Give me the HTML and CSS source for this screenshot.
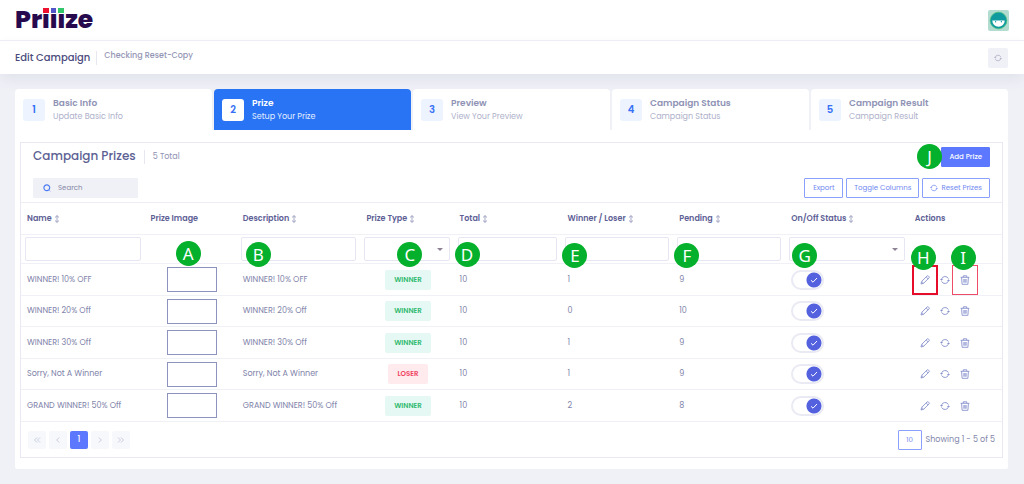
FILE: index.html
```html
<!DOCTYPE html>
<html lang="en">
<head>
<meta charset="utf-8">
<title>Priiize - Edit Campaign</title>
<link rel="stylesheet" href="styles.css">
</head>
<body>
<svg class="sprite" aria-hidden="true">
  <symbol id="sort" viewBox="0 0 6 8"><path d="M3 .7v6.6M1 2.5 3 .6l2 1.9M1 5.5l2 1.9 2-1.9" fill="none" stroke="currentColor" stroke-width=".8"/></symbol>
  <symbol id="sync" viewBox="0 0 10 10"><path d="M1.5 4.2A3.7 3.7 0 0 1 8.4 3.6M8.5 5.8A3.7 3.7 0 0 1 1.6 6.4" fill="none" stroke="currentColor" stroke-width=".9"/><path d="M0 4h3L1.5 5.7zM10 6H7l1.500-1.700z" fill="currentColor"/></symbol>
  <symbol id="pencil" viewBox="0 0 10 10"><path d="M1 9l.7-2.600L7 1.100a1 1 0 0 1 1.500 0l.4.4a1 1 0 0 1 0 1.500L3.600 8.300zM6.200 2l1.900 1.900M1.800 6.500l1.700 1.700" fill="none" stroke="currentColor" stroke-width=".9" stroke-linejoin="round"/></symbol>
  <symbol id="trash" viewBox="0 0 10 10"><path d="M.6 2.300h8.800M3.300 2.200V.8h3.400v1.400M1.600 2.400l.5 6.900h5.800l.5-6.900M3.900 4v3.700M5 4v3.700M6.100 4v3.700" fill="none" stroke="currentColor" stroke-width=".9"/></symbol>
  <symbol id="check" viewBox="0 0 8 8"><path d="M1 4.300l2 1.900L7 2" fill="none" stroke="currentColor" stroke-width="1"/></symbol>
  <symbol id="caret" viewBox="0 0 6 3"><path d="M0 0h6L3 3z" fill="currentColor"/></symbol>
</svg>

<header class="topbar">
  <a class="logo" href="#" aria-label="Priiize">Pr<span class="dot red">i</span><span class="dot blue">i</span><span class="dot green">i</span>ze</a>
  <svg class="avatar" viewBox="0 0 22 22" role="img" aria-label="User">
    <rect width="22" height="22" rx="2" fill="#b2dcd0"/>
    <circle cx="11" cy="11" r="8.700" fill="#0f9aa0" stroke="#43bd7a" stroke-width=".8"/>
    <path d="M4.500 11h13a6.500 6.500 0 0 1-13 0z" fill="#fff"/>
    <circle cx="8" cy="12.300" r=".7" fill="#0f9aa0"/><circle cx="14" cy="12.300" r=".7" fill="#0f9aa0"/>
  </svg>
</header>

<div class="subbar">
  <h1 class="page-title">Edit Campaign</h1>
  <span class="page-sub">Checking Reset-Copy</span>
  <button class="refresh" type="button" aria-label="Refresh"><svg class="icon-sm"><use href="#sync"/></svg></button>
</div>

<main class="content">
  <nav class="tabs">
    <a class="tab" href="#"><span class="step">1</span><span class="tab-text"><b>Basic Info</b><span>Update Basic Info</span></span></a>
    <a class="tab active" href="#" aria-current="step"><span class="step">2</span><span class="tab-text"><b>Prize</b><span>Setup Your Prize</span></span></a>
    <a class="tab" href="#"><span class="step">3</span><span class="tab-text"><b>Preview</b><span>View Your Preview</span></span></a>
    <a class="tab" href="#"><span class="step">4</span><span class="tab-text"><b>Campaign Status</b><span>Campaign Status</span></span></a>
    <a class="tab" href="#"><span class="step">5</span><span class="tab-text"><b>Campaign Result</b><span>Campaign Result</span></span></a>
  </nav>

  <div class="panel">
    <section class="card">
      <div class="card-head">
        <div class="head-row">
          <h2 class="card-title">Campaign Prizes</h2>
          <span class="total">5 Total</span>
          <div class="add-wrap">
            <button class="btn solid" type="button">Add Prize</button>
            <span class="marker mark-j">J</span>
          </div>
        </div>
        <div class="head-row">
          <label class="search">
            <svg class="icon-sm" viewBox="0 0 8 8" aria-hidden="true"><path d="M5.800 5.800l1.600 1.700" stroke="#a9bdfa" stroke-width="1"/><circle cx="3.800" cy="3.800" r="2.900" fill="none" stroke="#4c7cf3" stroke-width="1.200"/></svg>
            <input type="text" placeholder="Search" aria-label="Search">
          </label>
          <div class="tools">
            <button class="btn" type="button">Export</button>
            <button class="btn" type="button">Toggle Columns</button>
            <button class="btn" type="button"><svg class="icon-sm"><use href="#sync"/></svg>Reset Prizes</button>
          </div>
        </div>
      </div>

      <table class="prizes">
        <colgroup><col class="c-name"><col class="c-image"><col class="c-name"><col class="c-type"><col class="c-total"><col class="c-wl"><col class="c-pending"><col class="c-name"><col class="c-actions"></colgroup>
        <thead>
          <tr>
            <th>Name <svg class="sort"><use href="#sort"/></svg></th>
            <th>Prize Image</th>
            <th>Description <svg class="sort"><use href="#sort"/></svg></th>
            <th>Prize Type <svg class="sort"><use href="#sort"/></svg></th>
            <th>Total <svg class="sort"><use href="#sort"/></svg></th>
            <th>Winner / Loser <svg class="sort"><use href="#sort"/></svg></th>
            <th>Pending <svg class="sort"><use href="#sort"/></svg></th>
            <th>On/Off Status <svg class="sort"><use href="#sort"/></svg></th>
            <th>Actions</th>
          </tr>
          <tr class="filters">
            <td><input class="field" type="text" aria-label="Filter name"></td>
            <td><span class="marker mark-a">A</span></td>
            <td><input class="field" type="text" aria-label="Filter description"><span class="marker mark-b">B</span></td>
            <td><select class="field" aria-label="Filter prize type"><option></option></select><svg class="caret"><use href="#caret"/></svg><span class="marker mark-c">C</span></td>
            <td><input class="field" type="text" aria-label="Filter total"><span class="marker mark-d">D</span></td>
            <td><input class="field" type="text" aria-label="Filter winner or loser"><span class="marker mark-e">E</span></td>
            <td><input class="field" type="text" aria-label="Filter pending"><span class="marker mark-e">F</span></td>
            <td><select class="field" aria-label="Filter status"><option></option></select><svg class="caret"><use href="#caret"/></svg><span class="marker mark-g">G</span></td>
            <td><span class="marker mark-h">H</span><span class="marker mark-i">I</span></td>
          </tr>
        </thead>
        <tbody>
          <tr>
            <td>WINNER! 10% OFF</td><td><div class="thumb"></div></td><td>WINNER! 10% OFF</td>
            <td><span class="tag win">WINNER</span></td><td>10</td><td>1</td><td>9</td>
            <td><label class="switch"><input type="checkbox" checked aria-label="Status"><svg><use href="#check"/></svg></label></td>
            <td><div class="actions"><button class="act outlined" type="button" aria-label="Edit"><svg><use href="#pencil"/></svg></button><button class="act" type="button" aria-label="Reset"><svg><use href="#sync"/></svg></button><button class="act outlined-thin" type="button" aria-label="Delete"><svg><use href="#trash"/></svg></button></div></td>
          </tr>
          <tr>
            <td>WINNER! 20% Off</td><td><div class="thumb"></div></td><td>WINNER! 20% Off</td>
            <td><span class="tag win">WINNER</span></td><td>10</td><td>0</td><td>10</td>
            <td><label class="switch"><input type="checkbox" checked aria-label="Status"><svg><use href="#check"/></svg></label></td>
            <td><div class="actions"><button class="act" type="button" aria-label="Edit"><svg><use href="#pencil"/></svg></button><button class="act" type="button" aria-label="Reset"><svg><use href="#sync"/></svg></button><button class="act" type="button" aria-label="Delete"><svg><use href="#trash"/></svg></button></div></td>
          </tr>
          <tr>
            <td>WINNER! 30% Off</td><td><div class="thumb"></div></td><td>WINNER! 30% Off</td>
            <td><span class="tag win">WINNER</span></td><td>10</td><td>1</td><td>9</td>
            <td><label class="switch"><input type="checkbox" checked aria-label="Status"><svg><use href="#check"/></svg></label></td>
            <td><div class="actions"><button class="act" type="button" aria-label="Edit"><svg><use href="#pencil"/></svg></button><button class="act" type="button" aria-label="Reset"><svg><use href="#sync"/></svg></button><button class="act" type="button" aria-label="Delete"><svg><use href="#trash"/></svg></button></div></td>
          </tr>
          <tr>
            <td>Sorry, Not A Winner</td><td><div class="thumb"></div></td><td>Sorry, Not A Winner</td>
            <td><span class="tag lose">LOSER</span></td><td>10</td><td>1</td><td>9</td>
            <td><label class="switch"><input type="checkbox" checked aria-label="Status"><svg><use href="#check"/></svg></label></td>
            <td><div class="actions"><button class="act" type="button" aria-label="Edit"><svg><use href="#pencil"/></svg></button><button class="act" type="button" aria-label="Reset"><svg><use href="#sync"/></svg></button><button class="act" type="button" aria-label="Delete"><svg><use href="#trash"/></svg></button></div></td>
          </tr>
          <tr>
            <td>GRAND WINNER! 50% Off</td><td><div class="thumb"></div></td><td>GRAND WINNER! 50% Off</td>
            <td><span class="tag win">WINNER</span></td><td>10</td><td>2</td><td>8</td>
            <td><label class="switch"><input type="checkbox" checked aria-label="Status"><svg><use href="#check"/></svg></label></td>
            <td><div class="actions"><button class="act" type="button" aria-label="Edit"><svg><use href="#pencil"/></svg></button><button class="act" type="button" aria-label="Reset"><svg><use href="#sync"/></svg></button><button class="act" type="button" aria-label="Delete"><svg><use href="#trash"/></svg></button></div></td>
          </tr>
        </tbody>
      </table>

      <footer class="card-foot">
        <nav class="pager" aria-label="Pages">
          <button type="button" disabled aria-label="First"><svg viewBox="0 0 8 8"><path d="M4 1.500 1.500 4 4 6.500M7 1.500 4.500 4 7 6.500"/></svg></button>
          <button type="button" disabled aria-label="Previous"><svg viewBox="0 0 8 8"><path d="M5.200 1.500 2.700 4l2.500 2.500"/></svg></button>
          <button type="button" class="current">1</button>
          <button type="button" disabled aria-label="Next"><svg viewBox="0 0 8 8"><path d="M2.800 1.500 5.300 4 2.800 6.500"/></svg></button>
          <button type="button" disabled aria-label="Last"><svg viewBox="0 0 8 8"><path d="M1 1.500 3.500 4 1 6.500M4 1.500 6.500 4 4 6.500"/></svg></button>
        </nav>
        <select class="page-size" aria-label="Rows per page"><option>10</option></select>
        <span class="showing">Showing 1 - 5 of 5</span>
      </footer>
    </section>
  </div>
</main>
</body>
</html>
```
FILE: styles.css
```css
* { box-sizing: border-box; }
body {
  margin: 0;
  background: #f0f1f7;
  color: #8184aa;
  font: 8px/12px Poppins, Inter, "Open Sans", sans-serif;
}
button, input, select { font: inherit; color: inherit; margin: 0; }
button { cursor: pointer; }
a { color: inherit; text-decoration: none; }
.sprite { position: absolute; width: 0; height: 0; }
.icon-sm { width: 8px; height: 8px; flex: none; }

.topbar {
  display: flex;
  align-items: center;
  justify-content: space-between;
  height: 41px;
  padding: 0 15px;
  background: #fff;
  border-bottom: 1px solid #efeff7;
}
.logo {
  color: #270a4e;
  font-size: 25px;
  font-weight: 800;
  line-height: 36px;
}
.dot { position: relative; }
.dot::before {
  content: "";
  position: absolute;
  left: 0;
  right: 0;
  top: 6px;
  height: 5px;
  border: solid #fff;
  border-width: 0 1px 1px;
}
.red::before { background: #ee1130; }
.blue::before { background: #5356c9; }
.green::before { background: #32c66b; }
.avatar { width: 21px; height: 21px; }

.subbar {
  position: relative;
  display: flex;
  align-items: center;
  height: 33px;
  padding: 0 16px 0 15px;
  background: #fff;
  box-shadow: 0 6px 14px rgba(70, 75, 105, .08);
}
.page-title {
  margin: 0;
  padding-right: 6px;
  border-right: 1px solid #e6e7f1;
  color: #4a4b7c;
  font-size: 10px;
  font-weight: 500;
  line-height: 14px;
}
.page-sub { padding: 0 0 3px 7px; font-size: 8px; font-weight: 500; color: #9496b5; }
.refresh {
  display: grid;
  place-items: center;
  width: 20px;
  height: 20px;
  margin-left: auto;
  padding: 0;
  border: 0;
  border-radius: 2px;
  background: #f0f1f7;
  color: #a3a6bd;
}

.content { padding: 15px 16px 15px 15px; }
.tabs { position: relative; display: grid; grid-template-columns: repeat(5, 1fr); gap: 2px; }
.tab {
  display: flex;
  align-items: center;
  gap: 8px;
  height: 41px;
  padding-left: 8px;
  background: #fff;
  border-radius: 4px 4px 0 0;
  color: #aeb1ca;
}
.step {
  display: grid;
  place-items: center;
  width: 22px;
  height: 22px;
  border-radius: 3px;
  background: #edf4ff;
  color: #3670f5;
  font-size: 10px;
  font-weight: 600;
}
.tab-text { display: grid; font-size: 8px; line-height: 13px; }
.tab-text b { color: #9093b5; font-size: 9px; font-weight: 600; }
.active { background: #2874f4; color: #e4eeff; }
.active b { color: #fff; }
.active .step { background: #fff; }

.panel { padding: 12px 5px 11px; background: #fff; border-radius: 0 0 2px 2px; }
.card { border: 1px solid #e8e9f3; }
.card-head { display: grid; gap: 11px; padding: 4px 12px; border-bottom: 1px solid #ecedf5; }
.head-row { display: flex; align-items: center; height: 20px; }
.card-title {
  margin: 0;
  padding: 0 8px 2px 0;
  color: #5c5f94;
  font-size: 12px;
  font-weight: 500;
  line-height: 16px;
}
.total { padding: 1px 8px; border-left: 1px solid #e6e7f1; color: #8f92b4; }
.add-wrap { position: relative; margin-left: auto; }
.btn {
  display: flex;
  align-items: center;
  justify-content: center;
  gap: 3px;
  min-width: 39px;
  height: 20px;
  padding: 0 7px;
  border: 1px solid #8aa0fa;
  border-radius: 1px;
  background: #fff;
  color: #7089f2;
  font-size: 7px;
}
.solid { border-color: #5b78ff; background: #5b78ff; color: #fff; font-weight: 500; }
.tools { display: flex; gap: 3px; margin-left: auto; }
.search {
  display: flex;
  align-items: center;
  gap: 7px;
  width: 105px;
  height: 20px;
  padding: 0 10px;
  border-radius: 1px;
  background: #f0f1f7;
}
.search input { width: 100%; min-width: 0; padding: 0; border: 0; background: none; font-size: 7px; outline: 0; }
.search input::placeholder { color: #8588a6; opacity: 1; }

.prizes { width: 100%; table-layout: fixed; border-collapse: separate; border-spacing: 0; }
.c-name { width: 12.6%; }
.c-image { width: 9.4%; }
.c-type { width: 9.5%; }
.c-total { width: 11%; }
.c-wl { width: 11.4%; }
.c-pending { width: 11.4%; }
.c-actions { width: 9.5%; }
.prizes th, .prizes td {
  height: 32px;
  padding: 0 0 0 6px;
  border-bottom: 1px solid #f0f1f7;
  text-align: left;
  white-space: nowrap;
}
.prizes th { padding-top: 1px; color: #5d6095; font-weight: 600; }
.prizes tbody tr:nth-child(even) td { height: 31px; }
.prizes tbody td:nth-child(4) { padding: 0 0 0 2px; }
.prizes .filters td { position: relative; height: 29px; padding: 0 4px; }
.sort { width: 6px; height: 8px; vertical-align: middle; color: #8d90b8; }
.field {
  display: block;
  width: 100%;
  height: 24px;
  padding: 0 4px;
  border: 1px solid #e6e7f2;
  border-radius: 2px;
  background: #fff;
  appearance: none;
  outline: 0;
}
.caret { position: absolute; right: 11px; top: 13px; width: 6px; height: 3px; color: #8d8294; }
.thumb { width: 50px; height: 25px; margin-left: 16px; border: 1px solid #8d93bd; }
.prizes .tag {
  display: block;
  width: max-content;
  margin: 0 auto;
  padding: 4px 9px;
  border-radius: 2px;
  font-size: 7px;
  font-weight: 600;
}
.win { background: #e5f8f3; color: #30ba70; }
.lose { background: #ffebee; color: #f04461; }

.switch { display: grid; width: 33px; height: 20px; }
.switch input {
  grid-area: 1 / 1;
  width: 33px;
  height: 20px;
  border: 2px solid #e9eaf3;
  border-radius: 10px;
  background: radial-gradient(circle at 21px 8px, #5361df 7px, #fff 8px) no-repeat;
  appearance: none;
}
.switch svg { grid-area: 1 / 1; width: 8px; height: 8px; align-self: center; justify-self: end; margin-right: 6px; color: #fff; }
.actions { display: flex; align-items: center; margin-left: -3px; }
.act {
  display: grid;
  place-items: center;
  width: 26px;
  height: 30px;
  padding: 0;
  border: 0;
  background: none;
  color: #8791cd;
}
.act + .act { margin-left: -6px; }
.act svg { width: 10px; height: 10px; }
.outlined { border: 2px solid #e60d2b; }
.outlined-thin { border: 1px solid #ef4d67; }

.marker {
  position: absolute;
  z-index: 2;
  display: grid;
  place-items: center;
  width: 25px;
  height: 25px;
  border-radius: 50%;
  background: #05b02c;
  color: #fff;
  font: 17px/25px "Noto Sans", "Open Sans", sans-serif;
}
.mark-a { left: 31px; top: 6px; }
.mark-b { left: 9px; top: 7px; }
.mark-c { left: 37px; top: 7px; }
.mark-d { left: 1px; top: 7px; }
.mark-e { left: 1px; top: 8px; }
.mark-g { left: 7px; top: 8px; }
.mark-h { left: 2px; top: 10px; }
.mark-i { left: 42px; top: 10px; }
.mark-j { right: 48px; top: -3px; }

.card-foot { display: flex; align-items: center; gap: 4px; height: 35px; padding: 0 7px; }
.pager { display: flex; gap: 3px; margin-right: auto; }
.pager button {
  display: grid;
  place-items: center;
  width: 18px;
  height: 18px;
  padding: 0;
  border: 0;
  border-radius: 2px;
  background: #f7f8fb;
  color: #c9ccdf;
}
.pager svg { width: 8px; height: 8px; fill: none; stroke: currentColor; }
.pager .current { background: #5b78ff; color: #fff; font-weight: 500; }
.page-size {
  width: 24px;
  height: 20px;
  padding: 0;
  border: 1px solid #8aa0fa;
  border-radius: 1px;
  background: #fff;
  color: #7089f2;
  font-size: 7px;
  text-align: center;
  text-align-last: center;
  appearance: none;
}
.showing { color: #8487ab; }
```
